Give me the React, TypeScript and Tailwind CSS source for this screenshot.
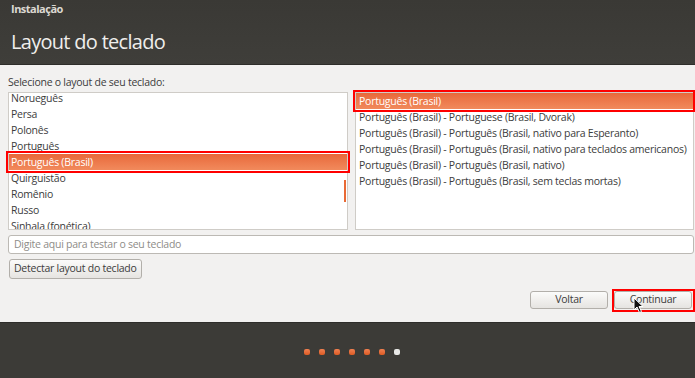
import React from "react";

const leftItems = [
  "Norueguês",
  "Persa",
  "Polonês",
  "Português",
  "Português (Brasil)",
  "Quirguistão",
  "Romênio",
  "Russo",
  "Sinhala (fonética)",
];

const rightItems = [
  "Português (Brasil)",
  "Português (Brasil) - Portuguese (Brasil, Dvorak)",
  "Português (Brasil) - Português (Brasil, nativo para Esperanto)",
  "Português (Brasil) - Português (Brasil, nativo para teclados americanos)",
  "Português (Brasil) - Português (Brasil, nativo)",
  "Português (Brasil) - Português (Brasil, sem teclas mortas)",
];

const rowBase = "h-[16px] leading-[16px] whitespace-nowrap text-[10.5px] tracking-[-0.25px]";
const rowSel = " text-white bg-gradient-to-b from-[#e8683a] to-[#f18a5c]";

export default function App() {
  return (
    <div
      className="relative w-[695px] h-[378px] flex flex-col overflow-hidden bg-[#f2f1f0] text-[#3c3c3c]"
      style={{ fontFamily: '"Open Sans", "DejaVu Sans", sans-serif' }}
    >
      {/* Header */}
      <div className="h-[65px] shrink-0 bg-gradient-to-b from-[#3a3935] to-[#3f3e3a] flex flex-col pl-[11px] border-b border-[#2e2d2a]">
        <div className="pt-[2px] text-[11px] leading-[13px] font-bold tracking-[-0.5px] text-[#dcd9d2]">Instalação</div>
        <div className="mt-[15px] text-[20px] leading-[24px] tracking-[-0.7px] text-[#efeeec]">Layout do teclado</div>
      </div>

      {/* Body */}
      <div className="h-[257px] shrink-0 flex flex-col pl-[8px] pr-[1px]">
        <div className="pt-[10px] text-[10.5px] tracking-[-0.25px] leading-[14px] whitespace-nowrap">Selecione o layout de seu teclado:</div>
        <div className="mt-[3px] flex gap-[7px] h-[138px]">
          {/* Left list */}
          <div className="relative w-[340px] h-full bg-white border border-[#cfccc7] overflow-hidden">
            <div className="-mt-[3px] flex flex-col">
              {leftItems.map((t, i) => (
                <div key={t} className={rowBase + " pl-[2px]" + (i === 4 ? rowSel : "")}>
                  {t}
                </div>
              ))}
            </div>
            <div className="absolute right-[1px] top-[87px] w-[2px] h-[22px] bg-[#e96a35]" />
          </div>
          {/* Right list */}
          <div className="flex-1 h-full bg-white border border-[#cfccc7] overflow-hidden">
            <div className="flex flex-col">
              {rightItems.map((t, i) => (
                <div key={t} className={rowBase + " pl-[3px]" + (i === 0 ? rowSel : "")}>
                  {t}
                </div>
              ))}
            </div>
          </div>
        </div>

        {/* Test input */}
        <div className="mt-[5px] h-[19px] rounded-[3px] border border-[#bcb9b4] bg-white flex items-center pl-[5px] text-[10.5px] tracking-[-0.25px] text-[#8e8c88] whitespace-nowrap">
          Digite aqui para testar o seu teclado
        </div>

        {/* Detect */}
        <div className="mt-[5px] flex">
          <div className="h-[20px] px-[4px] ml-[1px] rounded-[3px] border border-[#b2afaa] bg-gradient-to-b from-[#fbfbfa] to-[#e6e4e1] flex items-center text-[10.5px] tracking-[-0.25px] whitespace-nowrap text-[#3c3c3c]">
            Detectar layout do teclado
          </div>
        </div>

        {/* Nav buttons */}
        <div className="mt-[12px] flex justify-end gap-[6px] pr-[2px]">
          <div className="w-[78px] h-[18px] rounded-[3px] border border-[#b2afaa] bg-gradient-to-b from-[#fbfbfa] to-[#e6e4e1] flex items-center justify-center text-[10.5px] tracking-[-0.25px]">
            Voltar
          </div>
          <div className="relative w-[78px] h-[18px] rounded-[3px] border border-[#b2afaa] bg-gradient-to-b from-[#fbfbfa] to-[#e6e4e1] flex items-center justify-center text-[10.5px] tracking-[-0.25px]">
            Continuar
            <div className="absolute -left-[3px] -top-[3px] w-[83px] h-[23px] border-2 border-[#ff0000]" />
            <svg className="absolute left-[18px] top-[5px]" width="11" height="17" viewBox="0 0 11 17">
              <path d="M1 1 L1 13 L4 10 L6.5 15.5 L8.5 14.5 L6 9.5 L10 9.5 Z" fill="#111" stroke="#fff" strokeWidth="1" />
            </svg>
          </div>
        </div>
      </div>

      {/* Footer */}
      <div className="flex-1 bg-[#3c3b37] border-t border-[#2e2d2a] flex justify-center pl-[8px] pt-[26px]">
        <div className="flex gap-[9px] h-[6px]">
          {[0, 1, 2, 3, 4, 5].map((i) => (
            <div key={i} className="w-[6px] h-[6px] rounded-[2px] bg-gradient-to-b from-[#f08050] to-[#dd5b22]" />
          ))}
          <div className="w-[6px] h-[6px] rounded-[2px] bg-[#e8e8e6]" />
        </div>
      </div>

      {/* annotation overlays */}
      <div className="pointer-events-none absolute left-[6px] top-[151px] w-[344px] h-[22px] border-2 border-[#ff0000]" />
      <div className="pointer-events-none absolute left-[353px] top-[90px] w-[342px] h-[22px] border-2 border-[#ff0000]" />
    </div>
  );
}
